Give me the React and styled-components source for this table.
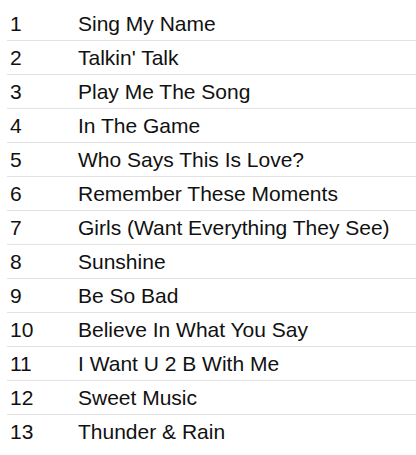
import styled, { createGlobalStyle } from "styled-components";

const GlobalStyle = createGlobalStyle`
  html, body {
    margin: 0;
    padding: 0;
    background: #fff;
  }
`

const TRACKS = [
  "Sing My Name",
  "Talkin' Talk",
  "Play Me The Song",
  "In The Game",
  "Who Says This Is Love?",
  "Remember These Moments",
  "Girls (Want Everything They See)",
  "Sunshine",
  "Be So Bad",
  "Believe In What You Say",
  "I Want U 2 B With Me",
  "Sweet Music",
  "Thunder & Rain",
]

const PageWrapper = styled.div`
  padding: 7px 0 7px 7px;
  font-family: "Liberation Sans", Arial, sans-serif;
  font-size: 21px;
  color: #111;
`

const TrackList = styled.ol`
  list-style: none;
  margin: 0;
  padding: 0;
`

const TrackRow = styled.li`
  display: grid;
  grid-template-columns: 71px 1fr;
  align-items: center;
  box-sizing: border-box;
  height: 34px;
  border-bottom: 1px solid #e2e2e2;

  &:last-child {
    border-bottom: none;
  }
`

const TrackNumber = styled.span`
  padding-left: 3px;
`

const TrackTitle = styled.span`
  white-space: nowrap;
`

const App = () => {
  return (
    <PageWrapper>
      <GlobalStyle />
      <TrackList>
        {TRACKS.map((title, i) => (
          <TrackRow key={title}>
            <TrackNumber>{i + 1}</TrackNumber>
            <TrackTitle>{title}</TrackTitle>
          </TrackRow>
        ))}
      </TrackList>
    </PageWrapper>
  )
}

export default App
